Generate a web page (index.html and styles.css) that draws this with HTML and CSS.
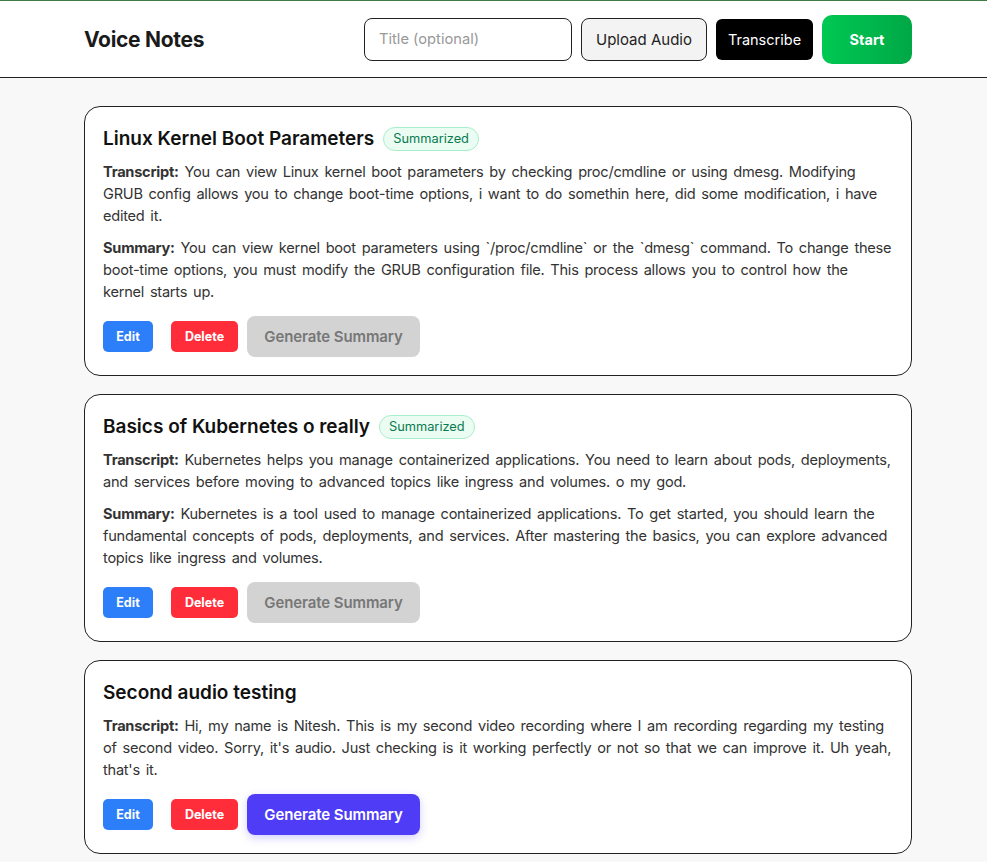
FILE: index.html
```html
<!DOCTYPE html>
<html lang="en">
<head>
<meta charset="utf-8">
<title>Voice Notes</title>
<link rel="stylesheet" href="styles.css">
</head>
<body>
<header class="topbar">
  <div class="topbar-inner">
    <h1 class="brand">Voice Notes</h1>
    <div class="controls">
      <input class="title-input" type="text" placeholder="Title (optional)">
      <button class="btn-upload">Upload Audio</button>
      <button class="btn-transcribe">Transcribe</button>
      <button class="btn-start">Start</button>
    </div>
  </div>
</header>
<main class="notes">
  <article class="card">
    <div class="card-head">
      <h2 class="card-title">Linux Kernel Boot Parameters</h2>
      <span class="badge">Summarized</span>
    </div>
    <p class="text"><strong>Transcript:</strong> You can view Linux kernel boot parameters by checking proc/cmdline or using dmesg. Modifying GRUB config allows you to change boot-time options, i want to do somethin here, did some modification, i have edited it.</p>
    <p class="text"><strong>Summary:</strong> You can view kernel boot parameters using `/proc/cmdline` or the `dmesg` command. To change these boot-time options, you must modify the GRUB configuration file. This process allows you to control how the kernel starts up.</p>
    <div class="actions">
      <button class="btn-edit">Edit</button>
      <button class="btn-delete">Delete</button>
      <button class="btn-gen is-disabled">Generate Summary</button>
    </div>
  </article>
  <article class="card">
    <div class="card-head">
      <h2 class="card-title">Basics of Kubernetes o really</h2>
      <span class="badge">Summarized</span>
    </div>
    <p class="text"><strong>Transcript:</strong> Kubernetes helps you manage containerized applications. You need to learn about pods, deployments, and services before moving to advanced topics like ingress and volumes. o my god.</p>
    <p class="text"><strong>Summary:</strong> Kubernetes is a tool used to manage containerized applications. To get started, you should learn the fundamental concepts of pods, deployments, and services. After mastering the basics, you can explore advanced topics like ingress and volumes.</p>
    <div class="actions">
      <button class="btn-edit">Edit</button>
      <button class="btn-delete">Delete</button>
      <button class="btn-gen is-disabled">Generate Summary</button>
    </div>
  </article>
  <article class="card">
    <div class="card-head">
      <h2 class="card-title">Second audio testing</h2>
    </div>
    <p class="text"><strong>Transcript:</strong> Hi, my name is Nitesh. This is my second video recording where I am recording regarding my testing of second video. Sorry, it's audio. Just checking is it working perfectly or not so that we can improve it. Uh yeah, that's it.</p>
    <div class="actions">
      <button class="btn-edit">Edit</button>
      <button class="btn-delete">Delete</button>
      <button class="btn-gen is-active">Generate Summary</button>
    </div>
  </article>
</main>
</body>
</html>
```
FILE: styles.css
```css
* { box-sizing: border-box; }
html, body { margin: 0; padding: 0; }
body {
  background: #f8f8f8;
  font-family: "Inter", "Noto Sans", sans-serif;
  color: #333;
  border-top: 1px solid #3f7d46;
}
.topbar {
  background: #fff;
  border-bottom: 1px solid #222;
}
.topbar-inner {
  width: 828px;
  margin-left: 84px;
  height: 76px;
  display: flex;
  align-items: center;
  justify-content: space-between;
}
.brand {
  margin: 0;
  font-size: 21px;
  font-weight: 700;
  color: #1a1a1a;
  letter-spacing: -0.3px;
}
.controls {
  display: flex;
  align-items: center;
  gap: 9px;
}
.title-input {
  width: 208px;
  height: 43px;
  border: 1px solid #222;
  border-radius: 8px;
  padding: 0 14px;
  font-family: inherit;
  font-size: 14.7px;
  color: #333;
  outline: none;
}
.title-input::placeholder { color: #999; }
button { font-family: inherit; cursor: pointer; }
.btn-upload {
  height: 43px;
  width: 126px;
  padding: 0;
  background: #f3f3f3;
  border: 1px solid #222;
  border-radius: 8px;
  font-size: 15px;
  color: #222;
}
.btn-transcribe {
  height: 41px;
  width: 97px;
  padding: 0;
  background: #000;
  color: #fff;
  border: none;
  border-radius: 6px;
  font-size: 14.5px;
}
.btn-start {
  height: 49px;
  width: 90px;
  background: linear-gradient(90deg, #00c853, #00a846);
  color: #fff;
  border: none;
  border-radius: 10px;
  font-size: 14.5px;
  font-weight: 700;
}
.notes {
  width: 828px;
  margin: 28px 0 0 84px;
  display: flex;
  flex-direction: column;
  gap: 18px;
  padding-bottom: 10px;
}
.card {
  background: #fff;
  border: 1px solid #222;
  border-radius: 16px;
  padding: 18px 18px 18px;
}
.card-head {
  display: flex;
  align-items: center;
  gap: 9px;
  margin-bottom: 8px;
}
.card-title {
  margin: 0;
  font-size: 19px;
  font-weight: 600;
  color: #111;
  line-height: 28px;
}
.badge {
  display: inline-block;
  padding: 1px 9px;
  font-size: 12.8px;
  line-height: 20px;
  color: #087a4f;
  background: #ebfdf3;
  border: 1px solid #a7efca;
  border-radius: 12px;
}
.text {
  margin: 0 0 10px;
  font-size: 14.6px;
  letter-spacing: -0.255px;
  word-spacing: 2px;
  line-height: 22px;
  color: #333;
}
.text strong { font-weight: 700; color: #333; }
.actions {
  display: flex;
  align-items: center;
  margin-top: 13px;
}
.btn-edit, .btn-delete {
  height: 31px;
  border: none;
  border-radius: 5px;
  color: #fff;
  font-size: 12.5px;
  font-weight: 700;
  padding: 0;
}
.btn-edit { background: #2d7ff9; margin-right: 18px; width: 50px; }
.btn-delete { background: #ff2d3a; margin-right: 9px; width: 67px; }
.btn-gen {
  height: 41px;
  width: 173px;
  padding: 0;
  border: none;
  border-radius: 8px;
  font-size: 15px;
  font-weight: 600;
  letter-spacing: -0.1px;
}
.btn-gen.is-disabled { background: #d3d3d3; color: #777; }
.btn-gen.is-active {
  background: #4f3cf7;
  color: #fff;
  box-shadow: 0 3px 8px rgba(79, 60, 247, 0.25);
}
```
